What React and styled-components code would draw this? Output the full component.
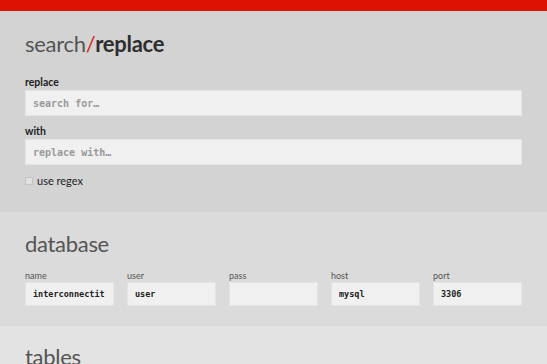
import React from "react";
import styled, { createGlobalStyle } from "styled-components";

const Global = createGlobalStyle`
  body {
    margin: 0;
    font-family: Lato, "Open Sans", sans-serif;
    background: #e3e3e3;
  }
`;

const TopBar = styled.div`
  height: 11px;
  background: #dc1300;
`;

const Section = styled.section`
  background: ${(p) => p.$bg};
  padding: ${(p) => p.$pad || "20px 25px 24px"};
`;

const Title = styled.h1`
  margin: 0 0 ${(p) => p.$gap || "19px"};
  font-size: 22px;
  line-height: 26px;
  font-weight: 400;
  color: #555;
  letter-spacing: -0.3px;

  span {
    color: #d42a1a;
  }

  b {
    font-weight: 700;
    color: #2e2e2e;
  }
`;

const Label = styled.label`
  display: block;
  font-size: ${(p) => (p.$small ? "9px" : "10.5px")};
  font-weight: ${(p) => (p.$small ? 400 : 700)};
  color: ${(p) => (p.$small ? "#555" : "#222")};
  line-height: ${(p) => (p.$small ? "11px" : "13px")};
  margin-bottom: 1px;
`;

const Input = styled.input`
  display: block;
  box-sizing: border-box;
  width: 100%;
  height: ${(p) => (p.$small ? "24px" : "26px")};
  border: 1px solid #e4e4e4;
  background: #f0f0f0;
  padding: 0 7px;
  font-family: "DejaVu Sans Mono", monospace;
  font-size: ${(p) => (p.$small ? "8.5px" : "10px")};
  font-weight: 700;
  color: #222;
  outline: none;

  &::placeholder {
    color: #9a9a9a;
  }
`;

const Field = styled.div`
  margin-bottom: 9px;
`;

const Check = styled.label`
  display: flex;
  align-items: center;
  gap: 4px;
  font-size: 11px;
  line-height: 14px;
  color: #222;
  margin-top: 8px;

  i {
    width: 6px;
    height: 6px;
    border: 1px solid #c4c4c4;
    background: #e0e0e0;
  }
`;

const Row = styled.div`
  display: grid;
  grid-template-columns: repeat(5, 1fr);
  gap: 13px;
`;

const db = [
  ["name", "interconnectit"],
  ["user", "user"],
  ["pass", ""],
  ["host", "mysql"],
  ["port", "3306"],
];

export default function App() {
  return (
    <>
      <Global />
      <TopBar />
      <Section $bg="#d3d3d3" $pad="20px 25px 24px">
        <Title>
          search<span>/</span>
          <b>replace</b>
        </Title>
        <Field>
          <Label>replace</Label>
          <Input placeholder="search for…" />
        </Field>
        <Field>
          <Label>with</Label>
          <Input placeholder="replace with…" />
        </Field>
        <Check>
          <i />
          use regex
        </Check>
      </Section>
      <Section $bg="#dbdbdb" $pad="19px 25px 20px">
        <Title $gap="13px">database</Title>
        <Row>
          {db.map(([l, v]) => (
            <div key={l}>
              <Label $small>{l}</Label>
              <Input $small defaultValue={v} />
            </div>
          ))}
        </Row>
      </Section>
      <Section $bg="#e3e3e3" $pad="18px 25px">
        <Title>tables</Title>
      </Section>
    </>
  );
}
